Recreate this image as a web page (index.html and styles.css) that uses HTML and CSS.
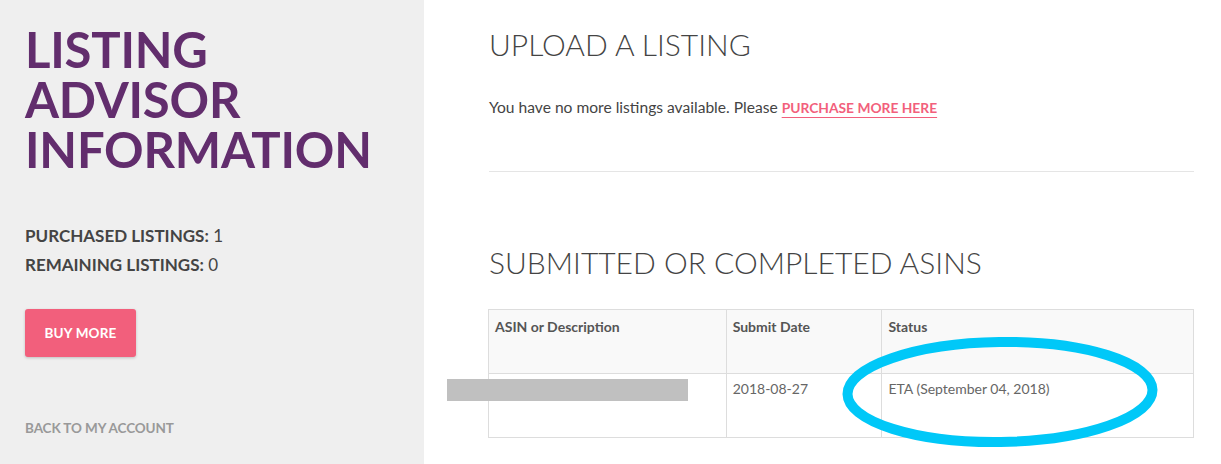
FILE: index.html
```html
<!DOCTYPE html>
<html>
<head>
<meta charset="utf-8">
<link rel="stylesheet" href="styles.css">
</head>
<body>
<div class="page">
  <aside class="sidebar">
    <h1 class="title">LISTING<br>ADVISOR<br>INFORMATION</h1>
    <div class="stats">
      <div class="stat"><b>PURCHASED LISTINGS:</b> 1</div>
      <div class="stat"><b>REMAINING LISTINGS:</b> 0</div>
    </div>
    <a class="btn">BUY MORE</a>
    <a class="back">BACK TO MY ACCOUNT</a>
  </aside>
  <main class="main">
    <h2 class="heading first">UPLOAD A LISTING</h2>
    <p class="msg">You have no more listings available. Please <a class="link">PURCHASE MORE HERE</a></p>
    <hr class="rule">
    <h2 class="heading second">SUBMITTED OR COMPLETED ASINS</h2>
    <div class="table-wrap">
      <table class="asins">
        <colgroup><col class="c1"><col class="c2"><col class="c3"></colgroup>
        <thead>
          <tr><th>ASIN or Description</th><th>Submit Date</th><th>Status</th></tr>
        </thead>
        <tbody>
          <tr><td></td><td>2018-08-27</td><td>ETA (September 04, 2018)</td></tr>
        </tbody>
      </table>
      <div class="redact"></div>
      <svg class="circle" width="325" height="120" viewBox="0 0 325 120">
        <ellipse cx="162" cy="60" rx="152.5" ry="50" fill="none" stroke="#00c8f8" stroke-width="10" transform="rotate(-0.8 162 60)"/>
      </svg>
    </div>
  </main>
</div>
</body>
</html>
```
FILE: styles.css
```css
* { box-sizing: border-box; }
html, body { margin: 0; padding: 0; }
body { font-family: Lato, "Liberation Sans", sans-serif; color: #444; background: #fff; }
.page { display: flex; min-height: 464px; }
.sidebar { width: 424px; flex: none; background: #efefef; padding: 24px 0 0 25px; display: flex; flex-direction: column; align-items: flex-start; }
.title { margin: 0; font-size: 49px; line-height: 50px; font-weight: 700; color: #622d6d; letter-spacing: -0.2px; }
.stats { margin-top: 47px; }
.stat { font-size: 17px; line-height: 29px; color: #444; }
.stat b { font-weight: 700; }
.btn { margin-top: 30px; width: 111px; height: 48px; background: #f25f7c; color: #fff; font-weight: 700; font-size: 13.5px; display: flex; align-items: center; justify-content: center; border-radius: 3px; box-shadow: 0 1px 3px rgba(0,0,0,0.2); letter-spacing: 0.2px; }
.back { margin-top: 63px; font-size: 13.5px; font-weight: 700; color: #999; letter-spacing: -0.1px; }
.main { flex: 1; padding: 0 27px 0 65px; }
.heading { margin: 0; font-weight: 300; font-size: 30px; line-height: 36px; color: #444; }
.heading.first { margin-top: 26px; }
.msg { margin: 33px 0 0; font-size: 15.6px; line-height: 24px; color: #444; }
.link { color: #f25f7c; font-weight: 700; font-size: 13.8px; text-decoration: underline; text-underline-offset: 4px; }
.rule { margin: 51px 0 0; border: 0; border-top: 1px solid #e5e5e5; }
.heading.second { margin-top: 72px; }
.table-wrap { position: relative; margin-top: 29px; }
.asins { width: 706px; margin-left: -1px; border-collapse: collapse; font-size: 14px; }
.asins col.c1 { width: 238px; }
.asins col.c2 { width: 156px; }
.asins col.c3 { width: 312px; }
.asins th, .asins td { border: 1px solid #ddd; text-align: left; vertical-align: top; padding: 8px 6px; height: 64px; }
.asins th { background: #f9f9f9; font-weight: 700; color: #555; }
.asins td { color: #666; padding-top: 6px; }
.redact { position: absolute; left: -42px; top: 70px; width: 241px; height: 22px; background: #c0c0c0; }
.circle { position: absolute; left: 349px; top: 23px; }
```
